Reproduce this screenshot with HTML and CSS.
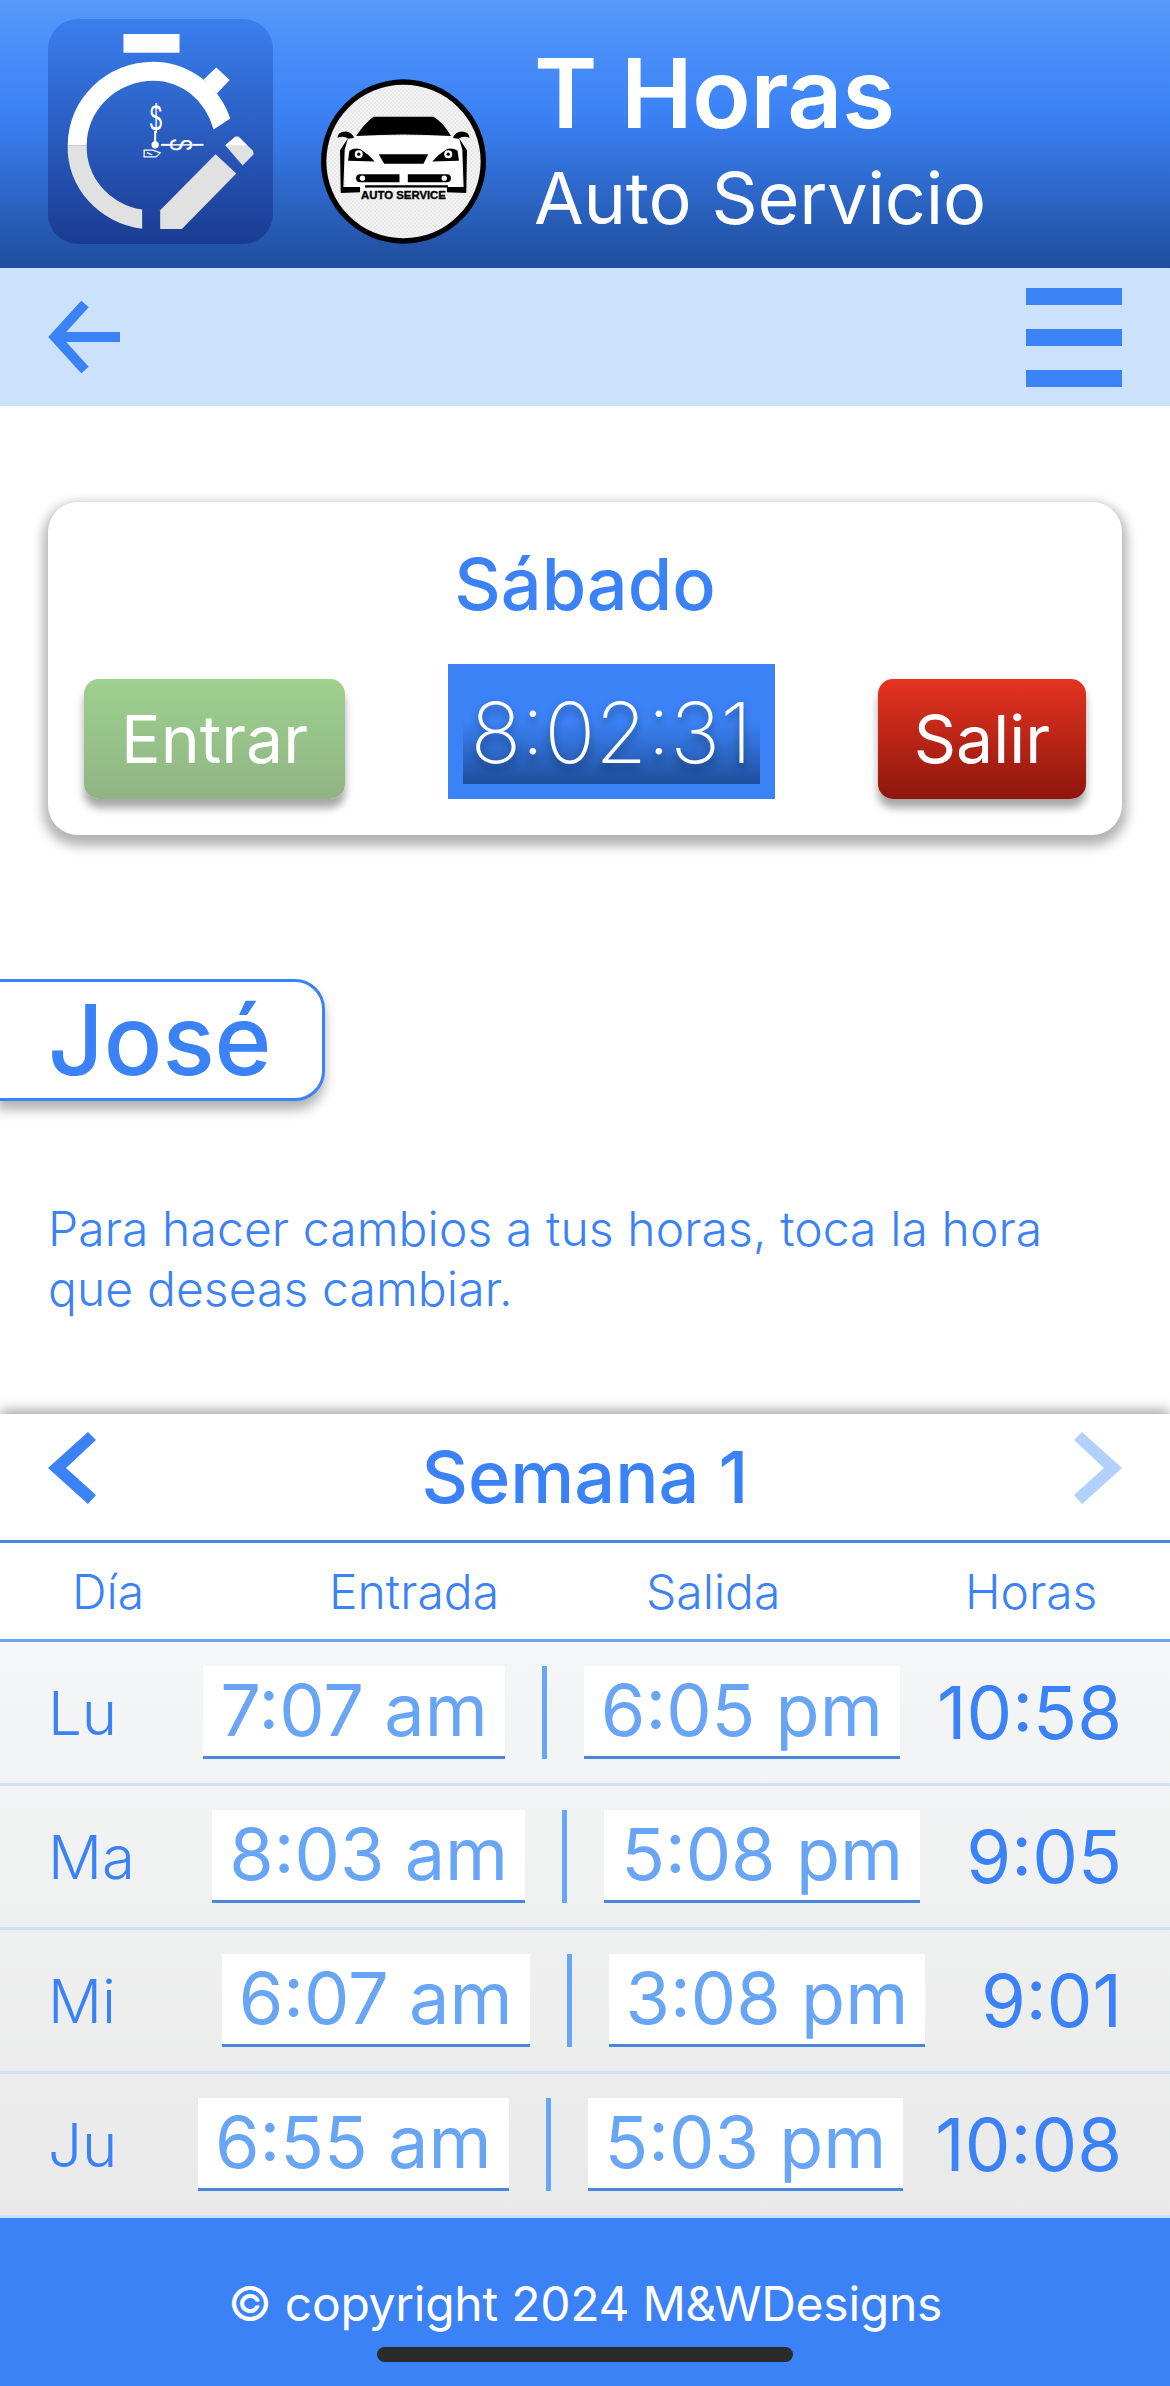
FILE: index.html
```html
<!DOCTYPE html>
<html lang="es">
<head>
<meta charset="UTF-8" />
<meta name="viewport" content="width=device-width, initial-scale=1" />
<title>T Horas</title>
<link rel="stylesheet" href="styles.css">
</head>
<body>
<header class="top">
  <svg class="app-icon" viewBox="54 27 674 674">
    <defs>
      <linearGradient id="iconBg" x1="0" y1="0" x2="0" y2="1">
        <stop offset="0" stop-color="#3a7fee" />
        <stop offset="1" stop-color="#1a3b92" />
      </linearGradient>
    </defs>
    <rect x="54" y="27" width="674" height="674" rx="90" fill="url(#iconBg)" />
    <rect x="280" y="72" width="168" height="56" fill="#fff" />
    <path d="M113 405 A257 250 0 0 1 370 155 A244 257 0 0 1 600 325 L550 358 A187 200 0 0 0 370 212 A200 193 0 0 0 170 405 Z" fill="#fff" />
    <path d="M113 405 A257 245 0 0 0 336 655 L336 598 A200 189 0 0 1 170 405 Z" fill="#e1e1e1" />
    <polygon points="520,208 558,172 598,210 560,250" fill="#fff" />
    <polygon points="390,600 556,432 618,490 455,656 390,656" fill="#e1e1e1" />
    <path d="M585 405 L615 380 L625 380 L668 422 L670 432 L637 466 Z" fill="#e1e1e1" />
    <path d="M585 405 L615 380 L625 380 L650 405 Z" fill="#fff" />
    <circle cx="375" cy="404" r="11" fill="#fff" />
    <rect x="372" y="362" width="6" height="34" fill="#fff" />
    <rect x="392" y="401" width="26" height="6" fill="#fff" />
    <rect x="488" y="401" width="32" height="6" fill="#fff" />
    <text class="icon-dollar" text-anchor="middle" transform="translate(377 362) scale(.72 1.2)">$</text>
    <text class="icon-dollar" text-anchor="middle" transform="translate(418 404) rotate(90) scale(.68 1.05)">$</text>
    <path d="M342 420 H368 L390 428 L378 440 H342 Z M350 427 L366 434" fill="none" stroke="#fff" stroke-width="4" />
  </svg>

  <svg class="car-logo" viewBox="33 28 494 492">
    <defs>
      <pattern id="checks" width="12" height="12" patternUnits="userSpaceOnUse">
        <rect width="12" height="12" fill="#f6f6f6" />
        <rect width="6" height="6" fill="#e6e6e6" />
        <rect x="6" y="6" width="6" height="6" fill="#e6e6e6" />
      </pattern>
    </defs>
    <ellipse cx="280" cy="274" rx="247" ry="246" fill="#000" />
    <ellipse cx="280" cy="274" rx="231" ry="230" fill="url(#checks)" />
    <!-- body -->
    <path d="M100 212 L135 198 H425 L462 212 L452 362 H108 Z" fill="#fff" />
    <path d="M138 198 Q165 158 190 140 H370 Q400 158 422 198 Q280 188 138 198 Z" fill="#000" />
    <path d="M82 203 Q84 184 108 184 Q126 186 132 204 L116 206 Q100 196 82 203 Z" fill="#000" />
    <path d="M478 203 Q476 184 452 184 Q434 186 428 204 L444 206 Q460 196 478 203 Z" fill="#000" />
    <path d="M114 204 L104 238 L100 350 L150 350 L150 366 L92 368 L90 240 Z" fill="#000" />
    <path d="M446 204 L456 238 L460 350 L410 350 L410 366 L468 368 L470 240 Z" fill="#000" />
    <path d="M114 272 L118 242 Q135 230 152 238 L174 254 L194 274 Z" fill="#000" />
    <path d="M446 272 L442 242 Q425 230 408 238 L386 254 L366 274 Z" fill="#000" />
    <circle cx="146" cy="252" r="12" fill="#fff" />
    <circle cx="146" cy="252" r="5" fill="#000" />
    <circle cx="414" cy="252" r="12" fill="#fff" />
    <circle cx="414" cy="252" r="5" fill="#000" />
    <polygon points="206,252 354,252 340,281 222,281" fill="#000" />
    <path d="M150 312 H268 V336 H150 Q138 336 138 324 Q138 312 150 312 Z" fill="#000" />
    <path d="M293 312 H410 Q422 312 422 324 Q422 336 410 336 H293 Z" fill="#000" />
    <circle cx="157" cy="324" r="8" fill="#fff" />
    <circle cx="402" cy="324" r="8" fill="#fff" />
    <rect x="165" y="345" width="248" height="7" fill="#000" />
    <text class="car-text" x="280" y="387" text-anchor="middle" textLength="254" lengthAdjust="spacingAndGlyphs">AUTO SERVICE</text>
  </svg>

  <div class="brand">
    <h1>T Horas</h1>
    <p>Auto Servicio</p>
  </div>
</header>

<nav class="subnav">
  <svg class="back" viewBox="0 0 72 72">
    <path d="M37 3 L7 36 L37 69 M7 36 H72" fill="none" stroke="#3b82f6" stroke-width="10" />
  </svg>
  <div class="menu"><span></span><span></span><span></span></div>
</nav>

<section class="card">
  <h2>Sábado</h2>
  <div class="card-row">
    <button class="btn btn-in" type="button">Entrar</button>
    <div class="clock"><div class="clock-face">8:02:31</div></div>
    <button class="btn btn-out" type="button">Salir</button>
  </div>
</section>

<div class="name-tag">José</div>

<p class="hint">Para hacer cambios a tus horas, toca la hora que deseas cambiar.</p>

<section class="week">
  <div class="week-nav">
    <svg class="chev" viewBox="0 0 48 72"><polygon points="0,36 40,0 48,8 18,36 48,63 40,72" fill="#3b82f6" /></svg>
    <h3>Semana 1</h3>
    <svg class="chev chev-off" viewBox="0 0 48 72"><polygon points="48,36 8,0 0,8 30,36 0,63 8,72" fill="#b1d1fb" /></svg>
  </div>
  <div class="week-head">
    <span>Día</span><span>Entrada</span><span>Salida</span><span>Horas</span>
  </div>
  <div class="rows">
    <div class="row">
      <span class="day">Lu</span>
      <div class="times"><a class="time">7:07 am</a><i class="sep"></i><a class="time">6:05 pm</a></div>
      <span class="total">10:58</span>
    </div>
    <div class="row">
      <span class="day">Ma</span>
      <div class="times"><a class="time">8:03 am</a><i class="sep"></i><a class="time">5:08 pm</a></div>
      <span class="total">9:05</span>
    </div>
    <div class="row">
      <span class="day">Mi</span>
      <div class="times"><a class="time">6:07 am</a><i class="sep"></i><a class="time">3:08 pm</a></div>
      <span class="total">9:01</span>
    </div>
    <div class="row">
      <span class="day">Ju</span>
      <div class="times"><a class="time">6:55 am</a><i class="sep"></i><a class="time">5:03 pm</a></div>
      <span class="total">10:08</span>
    </div>
  </div>
</section>

<footer class="foot">
  <p>© copyright 2024 M&amp;WDesigns</p>
  <div class="home-bar"></div>
</footer>
</body>
</html>
```

FILE: styles.css
```css
* { box-sizing: border-box; }
html, body { margin: 0; padding: 0; }
body { width: 1170px; height: 2386px; overflow: hidden; background: #fff; font-family: Inter, "Noto Sans", sans-serif; color: #3b82f6; }
h1, h2, h3, p { margin: 0; font-weight: inherit; }

.top { height: 268px; padding: 19px 48px 0; display: flex; align-items: flex-start; background: linear-gradient(#5599f9 0%, #3b82f6 42%, #1f4d9c 100%); }
.app-icon { width: 225px; height: 225px; flex: none; }
.car-logo { width: 165px; height: 165px; flex: none; margin: 60px 0 0 48px; }
.brand { margin-left: 48px; color: #fff; }
.brand h1 { font-size: 96px; font-weight: 600; line-height: 116px; margin-top: 16px; letter-spacing: -.3px; }
.brand p { font-size: 72px; line-height: 86px; margin-top: 4px; letter-spacing: -.2px; }
.icon-dollar { font-family: "Liberation Sans", sans-serif; font-size: 92px; fill: #fff; }
.car-text { font-family: "Liberation Sans", sans-serif; font-size: 32px; font-weight: 700; fill: #000; stroke: #000; stroke-width: 1; }

.subnav { height: 138px; padding: 0 48px; display: flex; justify-content: space-between; align-items: center; background: #cce2fc; }
.back { width: 72px; height: 72px; }
.menu { width: 96px; display: flex; flex-direction: column; gap: 24px; }
.menu span { display: block; height: 17px; background: #3b82f6; }

.card { width: 1074px; height: 333px; margin: 96px 0 0 48px; padding: 0 36px 36px; display: flex; flex-direction: column; justify-content: space-between; background: #fff; border-radius: 30px; box-shadow: 0 6px 12px 5px rgba(0, 0, 0, .3); }
.card h2 { font-size: 72px; font-weight: 500; line-height: 86px; text-align: center; margin-top: 39px; }
.card-row { display: flex; justify-content: space-between; align-items: flex-end; }
.btn { height: 120px; padding: 0 36px; border: 0; border-radius: 15px; font-family: inherit; font-size: 66px; color: #fff; box-shadow: 0 9px 9px rgba(0, 0, 0, .35); }
.btn-in { padding: 0 37px; background: linear-gradient(#9dd18e, #90b484); }
.btn-out { background: linear-gradient(#e53421, #8e160c); }
.clock { width: 327px; height: 135px; padding: 15px; background: #3b82f6; }
.clock-face { height: 105px; background: linear-gradient(#3b82f6 40%, #1f4f9c 100%); color: #fff; font-size: 84px; font-weight: 200; line-height: 108px; text-align: center; text-shadow: 0 6px 8px rgba(0, 0, 0, .35); }

.name-tag { width: 328px; height: 122px; margin: 144px 0 0 -3px; border: 3px solid #3b82f6; border-radius: 0 30px 30px 0; padding-left: 48px; font-size: 97px; font-weight: 500; line-height: 115px; background: #fff; box-shadow: 0 9px 12px rgba(0, 0, 0, .3); }

.hint { margin: 98px 48px 0; font-size: 48px; font-weight: 300; line-height: 60px; letter-spacing: .1px; }

.week { margin-top: 95px; background: #fff; box-shadow: 0 -4px 12px rgba(0, 0, 0, .35); }
.week-nav { height: 129px; padding: 18px 48px 0; display: flex; justify-content: space-between; align-items: flex-start; border-bottom: 3px solid #4a86e0; }
.chev { width: 48px; height: 72px; }
.week-nav h3 { font-size: 72px; font-weight: 500; line-height: 86px; margin-top: 2px; }
.week-head { height: 99px; padding: 0 0 0 72px; display: grid; grid-template-columns: 257px 317px 319px 1fr; align-items: center; font-size: 48px; font-weight: 300; border-bottom: 3px solid #6aa2ee; }

.rows { background: linear-gradient(#f5f6f7, #e9e9e9); }
.row { height: 144px; padding: 0 48px; display: flex; justify-content: space-between; align-items: center; border-bottom: 3px solid #cce2fc; }
.day { width: 118px; font-size: 60px; font-weight: 300; }
.times { display: flex; gap: 37px; align-items: stretch; }
.time { padding: 0 17px; height: 93px; background: #fff; border-bottom: 3px solid #4a86e0; color: #68a5f4; font-size: 72px; line-height: 88px; }
.sep { width: 5px; background: #68a5f4; }
.total { font-size: 72.5px; }

.foot { position: relative; height: 168px; padding-top: 57px; background: #3b82f6; color: #fff; text-align: center; font-size: 48px; line-height: 58px; letter-spacing: -.27px; }
.home-bar { position: absolute; left: 377px; bottom: 24px; width: 416px; height: 15px; border-radius: 8px; background: #2b2b2b; }
```
